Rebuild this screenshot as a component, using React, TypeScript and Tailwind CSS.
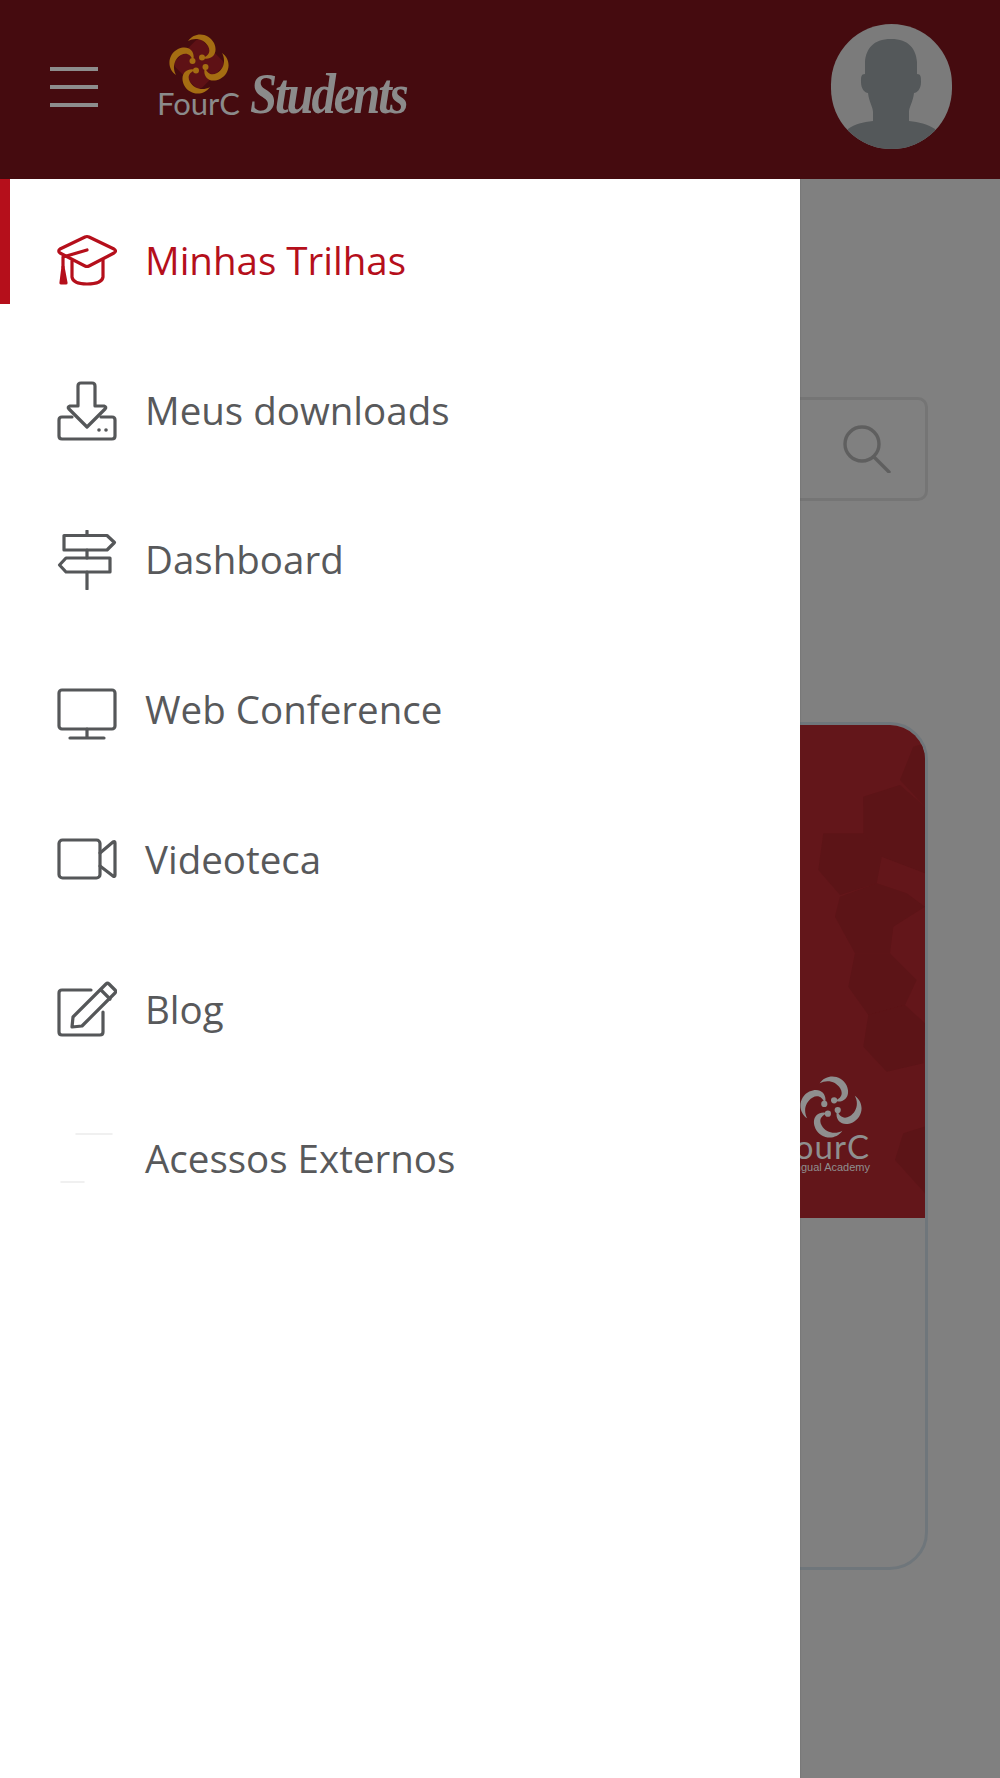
import type { ReactNode } from 'react';

function Swirl({ color, diamond, width }: { color: string; diamond?: string; width: number }) {
  const curl = 'M-11 -23 C-4 -33 10 -31 15 -21 C20 -10 12 -3 3 -6 C10 -8 12 -13 9 -18 C5 -25 -4 -27 -11 -23 Z';
  return (
    <svg viewBox="-30 -30 60 60" style={{ width, height: width }}>
      {diamond && <rect x="-19" y="-19" width="38" height="38" rx="5" transform="rotate(45)" fill={diamond} />}
      {[0, 90, 180, 270].map((r) => (
        <g key={r} transform={`rotate(${r})`} fill={color}>
          <path d={curl} />
          <circle cx="3" cy="-6.5" r="3" />
        </g>
      ))}
    </svg>
  );
}

function Icon({ children, color = '#555759' }: { children: ReactNode; color?: string }) {
  return (
    <svg
      viewBox="0 0 60 60"
      className="w-[60px] h-[60px] shrink-0"
      fill="none"
      stroke={color}
      strokeWidth="3.2"
      strokeLinecap="round"
      strokeLinejoin="round"
    >
      {children}
    </svg>
  );
}

const menu = [
  {
    label: 'Minhas Trilhas',
    active: true,
    icon: (
      <Icon color="#b50f1b">
        <path d="M28 6 Q30 5 32 6 L57 18 Q60 20 57 22 L32 35 Q30 36 28 35 L3 22 Q0.5 20 3 18 Z" />
        <path d="M15 30 V46 Q16 53 30 53 Q45 53 46 46 V29" />
        <path d="M30 19 L6 26 V36" />
        <path d="M6 36 L4 52 H9 Z" fill="#b50f1b" />
      </Icon>
    ),
  },
  {
    label: 'Meus downloads',
    icon: (
      <Icon>
        <path d="M21 25 V5 Q21 2 24 2 H35 Q38 2 38 5 V25 H47 Q50 26 48 28 L30 46 L12 28 Q10 26 13 25 Z" />
        <path d="M15 36 H5 Q2 36 2 39 V55 Q2 58 5 58 H55 Q58 58 58 55 V39 Q58 36 55 36 H44" />
        <circle cx="42" cy="49" r="1.8" fill="#555759" stroke="none" />
        <circle cx="49" cy="49" r="1.8" fill="#555759" stroke="none" />
      </Icon>
    ),
  },
  {
    label: 'Dashboard',
    icon: (
      <Icon>
        <path d="M30 1 V5 M30 20 V28 M30 42 V59" />
        <path d="M7 5.5 H50 L57.5 12.5 L50 20 H7 Z" />
        <path d="M9 28 H53 V42 H9 L2.5 35 Z" />
      </Icon>
    ),
  },
  {
    label: 'Web Conference',
    icon: (
      <Icon>
        <rect x="2" y="10" width="56" height="39" rx="3" />
        <path d="M30 49 V58 M13 58 H47" />
      </Icon>
    ),
  },
  {
    label: 'Videoteca',
    icon: (
      <Icon>
        <rect x="2" y="10" width="41" height="38" rx="3.5" />
        <path d="M43 23 L56 12 Q58 11 58 13 V45 Q58 47 56 46 L43 36" />
      </Icon>
    ),
  },
  {
    label: 'Blog',
    icon: (
      <Icon>
        <path d="M34 11 H5 Q2 11 2 14 V53 Q2 56 5 56 H43 Q46 56 46 53 V33" />
        <path d="M15 48 L16 38 L49 5 Q50.5 3.5 52 5 L58 11 Q59.5 12.5 58 14 L25 47 Z" />
        <path d="M44 11 L53 20" />
      </Icon>
    ),
  },
  {
    label: 'Acessos Externos',
    icon: (
      <Icon color="#ececec">
        <path d="M19 5 H55 M4 53 H27" strokeWidth="1.5" />
      </Icon>
    ),
  },
];

// traced in 3x crop coordinates, scaled down in the svg below
const hexagons = [
  '360,240 400,140 435,130 435,320',
  '250,290 360,255 435,320 435,520 305,470 250,400',
  '115,510 130,400 250,400 305,470 290,550 180,585',
  '165,650 180,590 290,550 380,580 435,620 340,680 330,760 225,760',
  '205,860 225,760 330,760 410,840 375,915 265,945',
  '250,1040 265,945 375,915 435,970 430,1090 320,1115',
  '345,1380 370,1300 435,1280 435,1480',
];

export default function App() {
  return (
    <div className="w-[1000px] h-[1778px] overflow-hidden flex flex-col bg-[#808080] font-['Open_Sans',sans-serif]">
      <header className="h-[179px] shrink-0 bg-[#450b0f] flex items-start">
        <div className="ml-[50px] mt-[67px] w-[48px] flex flex-col gap-[14px]">
          <div className="h-[4px] bg-[#8d8d8d]" />
          <div className="h-[4px] bg-[#8d8d8d]" />
          <div className="h-[4px] bg-[#8d8d8d]" />
        </div>
        <div className="ml-[61px] mt-[34px] h-[90px] flex items-start gap-[12px]">
          <div className="w-[79px] flex flex-col items-center">
            <Swirl color="#a56d12" diamond="#5e1115" width={60} />
            <span className="-mt-[3px] font-['Lato',sans-serif] text-[31px] leading-[24px] text-[#8b8b8b]">FourC</span>
          </div>
          <span className="mt-[31px] origin-left scale-x-[0.84] font-['Liberation_Serif',serif] font-bold italic text-[58px] leading-[58px] tracking-[-2.5px] text-[#8b8b8b]">
            Students
          </span>
        </div>
        <div className="ml-auto mr-[48px] mt-[24px] w-[121px] h-[125px] rounded-full overflow-hidden bg-[#7b7b7b]">
          <svg viewBox="0 0 121 125" className="w-full h-full" fill="#54585a">
            <path d="M60 15 C42 15 35 25 34 38 L34 50 C30 50 30 53 30 58 C30 65 34 69 37 69 C38 78 42 83 42 88 L42 97 C32 98 24 100 17 105 L17 125 L104 125 L104 105 C96 100 88 98 78 97 L78 88 C78 83 82 78 83 69 C86 69 90 65 90 58 C90 53 90 50 86 50 L86 38 C85 25 78 15 60 15 Z" />
          </svg>
        </div>
      </header>

      <div className="flex-1 flex min-h-0">
        <aside className="relative w-[800px] shrink-0 bg-white pt-[7px] shadow-[1px_0_1px_rgba(0,0,0,0.05)]">
          <div className="absolute left-0 top-0 w-[10px] h-[125px] bg-[#b50f1b]" />
          {menu.map((item) => (
            <div key={item.label} className="h-[149.7px] pl-[57px] flex items-center gap-[28px]">
              {item.icon}
              <span className={`text-[38.5px] leading-none -mt-[1px] ${item.active ? 'text-[#b50f1b]' : 'text-[#58595b]'}`}>
                {item.label}
              </span>
            </div>
          ))}
        </aside>

        <main className="flex-1 min-w-0 overflow-hidden pr-[72px] pt-[218px]">
          <div className="-ml-[400px] h-[104px] border-[3px] border-[#757575] rounded-[10px] flex items-center justify-end pr-[34px]">
            <svg viewBox="0 0 48 48" className="w-[48px] h-[48px]" fill="none" stroke="#5f5f5f" strokeWidth="3.4" strokeLinecap="round">
              <circle cx="19" cy="19" r="17" />
              <path d="M31 32 L46 47" />
            </svg>
          </div>

          <div className="-ml-[400px] mt-[221px] h-[848px] border-[3px] border-[#6f767b] rounded-[38px] overflow-hidden">
            <div className="relative h-[493px] bg-[#63161a] overflow-hidden">
              <svg viewBox="0 0 140 493" className="absolute right-0 top-0 w-[140px] h-[493px]" fill="#5c1417">
                <g transform="translate(-5 -25) scale(0.3333)">
                  {hexagons.map((p) => (
                    <polygon key={p} points={p} />
                  ))}
                </g>
              </svg>
              <div className="absolute right-[55px] top-[351px] flex flex-col items-end text-[#8f8f8f]">
                <div className="mr-[8px]">
                  <Swirl color="#8f8f8f" width={62} />
                </div>
                <span className="-mt-[6px] font-['Lato',sans-serif] text-[33px] leading-[28px] tracking-[1px]">FourC</span>
                <span className="font-['Liberation_Sans',sans-serif] text-[11px] leading-[14px] whitespace-nowrap">
                  Bilingual Academy
                </span>
              </div>
            </div>
          </div>
        </main>
      </div>
    </div>
  );
}
